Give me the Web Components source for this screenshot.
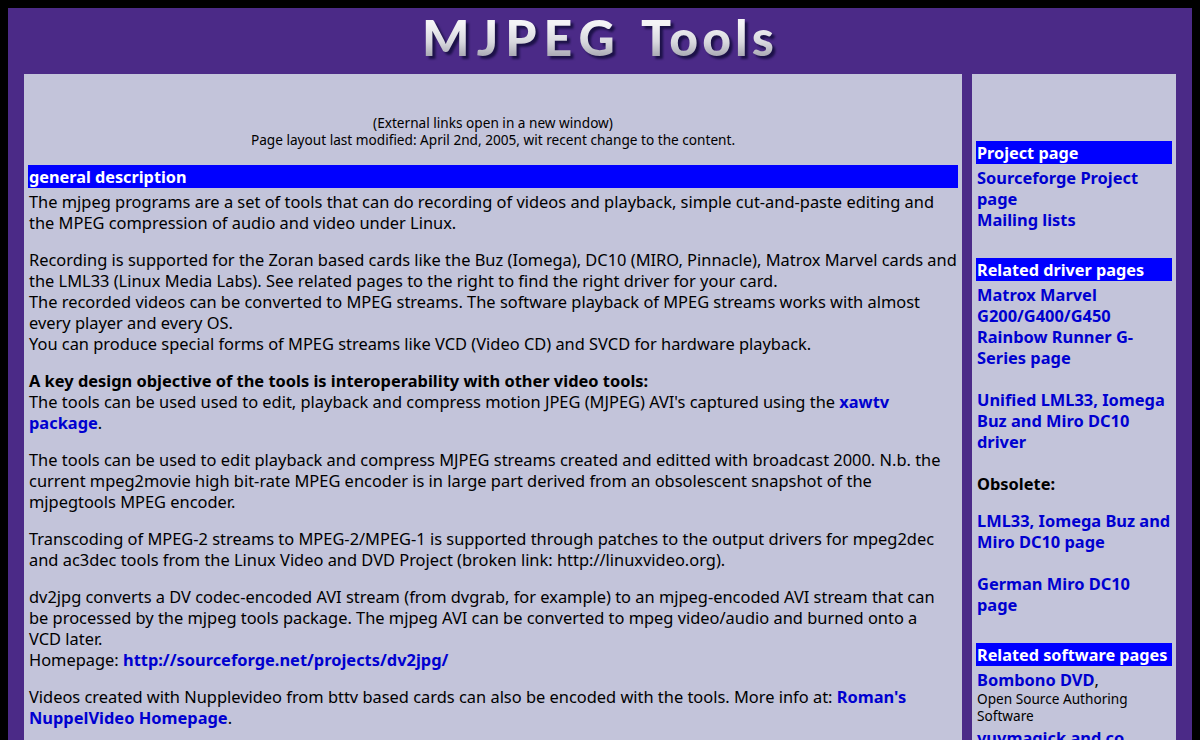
<!DOCTYPE html>
<html>
<head>
<meta charset="utf-8">
<title>MJPEG Tools</title>
<style>
  html { background: #000; overflow: hidden; }
  body { margin: 8px 8px 0; font-family: "Noto Sans", "Open Sans", sans-serif; font-size: 16.42px; line-height: 21px; color: #000; }
</style>
</head>
<body>

<mj-page>
  <mj-logo slot="logo"><i>MJPEG</i> Tools</mj-logo>

  <div slot="main">
    <mj-note>(External links open in a new window)<br>Page layout last modified: April 2nd, 2005, wit recent change to the content.</mj-note>
    <mj-section title="general description" wide>
      <mj-para>The mjpeg programs are a set of tools that can do recording of videos and playback, simple cut-and-paste editing and the MPEG compression of audio and video under Linux.</mj-para>
      <mj-para>Recording is supported for the Zoran based cards like the Buz (Iomega), DC10 (MIRO, Pinnacle), Matrox Marvel cards and the LML33 (Linux Media Labs). See related pages to the right to find the right driver for your card.<br>
      The recorded videos can be converted to MPEG streams. The software playback of MPEG streams works with almost every player and every OS.<br>
      You can produce special forms of MPEG streams like VCD (Video CD) and SVCD for hardware playback.</mj-para>
      <mj-para><b>A key design objective of the tools is interoperability with other video tools:</b><br>
      The tools can be used used to edit, playback and compress motion JPEG (MJPEG) AVI's captured using the <mj-link>xawtv package</mj-link>.</mj-para>
      <mj-para>The tools can be used to edit playback and compress MJPEG streams created and editted with broadcast 2000. N.b. the current mpeg2movie high bit-rate MPEG encoder is in large part derived from an obsolescent snapshot of the mjpegtools MPEG encoder.</mj-para>
      <mj-para>Transcoding of MPEG-2 streams to MPEG-2/MPEG-1 is supported through patches to the output drivers for mpeg2dec and ac3dec tools from the Linux Video and DVD Project (broken link: http://linuxvideo.org).</mj-para>
      <mj-para>dv2jpg converts a DV codec-encoded AVI stream (from dvgrab, for example) to an mjpeg-encoded AVI stream that can be processed by the mjpeg tools package. The mjpeg AVI can be converted to mpeg video/audio and burned onto a<br>VCD later.<br>
      Homepage: <mj-link>http://sourceforge.net/projects/dv2jpg/</mj-link></mj-para>
      <mj-para>Videos created with Nupplevideo from bttv based cards can also be encoded with the tools. More info at: <mj-link>Roman's NuppelVideo Homepage</mj-link>.</mj-para>
    </mj-section>
  </div>

  <div slot="side">
    <mj-section title="Project page">
      <mj-link>Sourceforge Project page</mj-link><br>
      <mj-link>Mailing lists</mj-link>
    </mj-section>
    <mj-section title="Related driver pages">
      <mj-link>Matrox Marvel G200/G400/G450 Rainbow Runner G-Series page</mj-link><br><br>
      <mj-link>Unified LML33, Iomega Buz and Miro DC10 driver</mj-link><br><br>
      <b>Obsolete:</b>
      <mj-para><mj-link>LML33, Iomega Buz and Miro DC10 page</mj-link><br><br>
      <mj-link>German Miro DC10 page</mj-link></mj-para>
    </mj-section>
    <mj-section title="Related software pages">
      <mj-link>Bombono DVD</mj-link>,
      <mj-small>Open Source Authoring Software</mj-small>
      <mj-link>yuvmagick and co.</mj-link>
    </mj-section>
  </div>
</mj-page>

<script>
class MjPage extends HTMLElement {
  constructor() {
    super();
    this.attachShadow({ mode: 'open' });
    this.shadowRoot.innerHTML = `
      <style>
        :host { display: block; background: #4b2a87; }
        #columns { display: flex; gap: 10px; padding: 0 16px 40px; align-items: stretch; }
        #main { width: 930px; padding: 0 4px 40px; background: #c3c4da; flex: none; }
        #side { width: 196px; padding: 67px 4px 0; background: #c3c4da; flex: none; }
      </style>
      <slot name="logo"></slot>
      <div id="columns">
        <div id="main"><slot name="main"></slot></div>
        <div id="side"><slot name="side"></slot></div>
      </div>
    `;
  }
}

class MjLogo extends HTMLElement {
  constructor() {
    super();
    this.attachShadow({ mode: 'open' });
    this.shadowRoot.innerHTML = `
      <style>
        :host { display: flex; justify-content: center; height: 66px; overflow: hidden; }
        span {
          font: 900 50px/58px "Lato", sans-serif;
          height: 62px;
          letter-spacing: 4px;
          word-spacing: 5px;
          white-space: nowrap;
          background: linear-gradient(#f4f4f6 25%, #d8d8de 55%, #a5a5b0 80%);
          -webkit-background-clip: text;
          background-clip: text;
          color: transparent;
          filter: drop-shadow(3px 3px 1px #1c1148);
        }
        ::slotted(i) { font-style: normal; letter-spacing: 7px; }
      </style>
      <span><slot></slot></span>
    `;
  }
}

class MjNote extends HTMLElement {
  constructor() {
    super();
    this.attachShadow({ mode: 'open' });
    this.shadowRoot.innerHTML = `
      <style>
        :host { display: block; padding: 40px 0 17px; text-align: center; font-size: 13.64px; line-height: 17px; }
      </style>
      <slot></slot>
    `;
  }
}

class MjSection extends HTMLElement {
  constructor() {
    super();
    this.attachShadow({ mode: 'open' });
    this.shadowRoot.innerHTML = `
      <style>
        :host { display: block; padding-bottom: 28px; }
        h2 { margin: 0 0 3px; padding: 2px 1px 0; background: #0000ff; color: #fff; font-size: 16.25px; line-height: 21px; font-weight: bold; }
        #body { padding: 0 1px; }
      </style>
      <h2></h2>
      <div id="body"><slot></slot></div>
    `;
  }
  connectedCallback() {
    this.shadowRoot.querySelector('h2').textContent = this.getAttribute('title');
  }
}

class MjPara extends HTMLElement {
  constructor() {
    super();
    this.attachShadow({ mode: 'open' });
    this.shadowRoot.innerHTML = `
      <style>
        :host { display: block; margin: 16px 0; }
        :host(:first-child) { margin-top: 0; }
        :host(:last-child) { margin-bottom: 0; }
      </style>
      <slot></slot>
    `;
  }
}

class MjLink extends HTMLElement {
  constructor() {
    super();
    this.attachShadow({ mode: 'open' });
    // no whitespace around the slot, it would show up before a following comma or period
    this.shadowRoot.innerHTML = `<style>:host { display: inline; color: #0000d0; font-weight: bold; }</style><slot></slot>`;
  }
}

class MjSmall extends HTMLElement {
  constructor() {
    super();
    this.attachShadow({ mode: 'open' });
    this.shadowRoot.innerHTML = `
      <style>
        :host { display: block; font-size: 13.64px; line-height: 17px; margin: 0 0 3px; }
      </style>
      <slot></slot>
    `;
  }
}

customElements.define('mj-page', MjPage);
customElements.define('mj-logo', MjLogo);
customElements.define('mj-note', MjNote);
customElements.define('mj-section', MjSection);
customElements.define('mj-para', MjPara);
customElements.define('mj-link', MjLink);
customElements.define('mj-small', MjSmall);
</script>
</body>
</html>
